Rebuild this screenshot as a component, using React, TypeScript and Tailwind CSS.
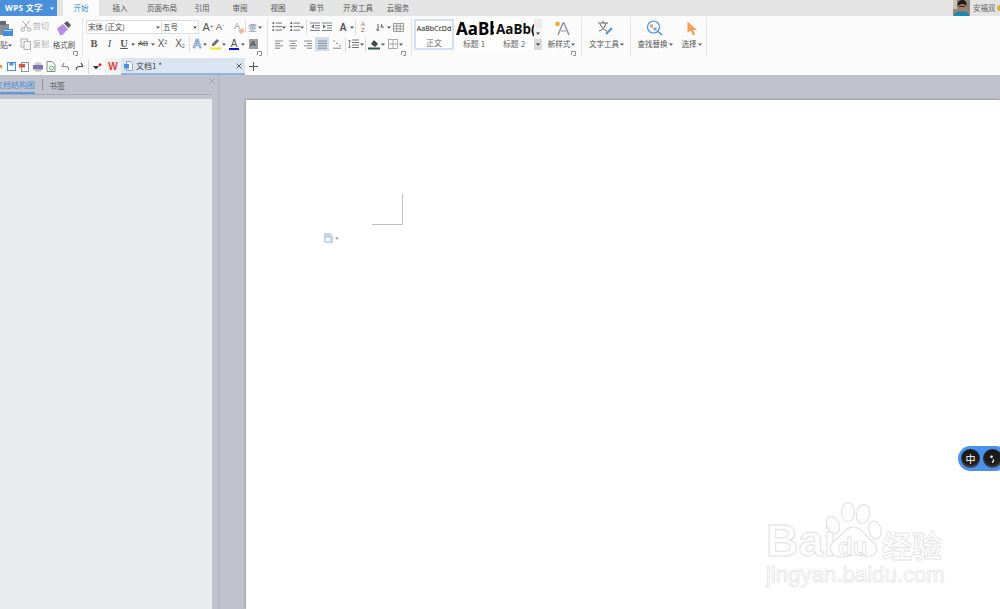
import React from "react";

const font = "font-['Noto_Sans_CJK_SC','Noto_Sans',sans-serif]";

function Caret({ w = 4, c = "#555" }: { w?: number; c?: string }) {
  return (
    <span className="flex shrink-0 items-center justify-center" style={{ width: w }}>
      <svg width="4" height="3" viewBox="0 0 4 3"><path d="M0 0.5h4L2 2.8z" fill={c} /></svg>
    </span>
  );
}

function Launcher() {
  return (
    <svg width="5" height="5" viewBox="0 0 5 5" className="shrink-0">
      <path d="M0.5 4V0.5H4.500V4.500H2" fill="none" stroke="#777" strokeWidth="0.8" />
    </svg>
  );
}

function Box({ w, children, active }: { w: number; children?: React.ReactNode; active?: boolean }) {
  return (
    <span className={`flex h-[14px] shrink-0 items-center justify-center ${active ? "bg-[#cfdcec]" : ""}`} style={{ width: w }}>
      {children}
    </span>
  );
}

function VLine() {
  return <span className="mx-[1px] h-[15px] w-px shrink-0 bg-[#dcdcdc]" />;
}

function Lines({ kind }: { kind: "left" | "center" | "right" | "just" | "dist" }) {
  const rows = {
    left: [[1, 8], [1, 5], [1, 8], [1, 5]],
    center: [[1, 8], [2.5, 5], [1, 8], [2.5, 5]],
    right: [[1, 8], [4, 5], [1, 8], [4, 5]],
    just: [[1, 9], [1, 9], [1, 9], [1, 9]],
    dist: [[1, 2], [4, 2], [7, 2], [1, 8]],
  }[kind];
  return (
    <svg width="11" height="9" viewBox="0 0 11 9">
      {rows.map((r, i) => (
        <rect key={i} x={r[0]} y={0.5 + i * 2.4} width={r[1]} height="1" fill="#85898f" />
      ))}
    </svg>
  );
}

function ListIcon({ numbered }: { numbered?: boolean }) {
  return (
    <svg width="10" height="10" viewBox="0 0 10 10">
      {[1, 4.5, 8].map((y) => (
        <g key={y}>
          <rect x="0.5" y={y - 0.7} width="1.6" height="1.6" fill={numbered ? "#333" : "#555"} />
          <rect x="3.500" y={y - 0.4} width="6.500" height="1" fill="#777" />
        </g>
      ))}
    </svg>
  );
}

function Indent({ out }: { out?: boolean }) {
  return (
    <svg width="10" height="10" viewBox="0 0 10 10">
      {[0.5, 3, 5.5, 8].map((y) => (
        <rect key={y} x={y === 0.5 || y === 8 ? 0 : 5} y={y} width={y === 0.5 || y === 8 ? 10 : 5} height="1" fill="#7b7f86" />
      ))}
      <path d={out ? "M4 2.500v4L1 4.500z" : "M1 2.500v4L4 4.500z"} fill="#5f6f86" />
    </svg>
  );
}

function Paste() {
  return (
    <svg width="14" height="17" viewBox="0 0 14 17">
      <rect x="-4" y="4" width="13" height="11" fill="#8a8d92" />
      <rect x="-1" y="1" width="7" height="4" fill="#666a70" />
      <rect x="3" y="9" width="10" height="7" fill="#3f8ee0" />
      <rect x="4" y="10" width="8" height="1" fill="#bcd8f5" />
    </svg>
  );
}

function Brush() {
  return (
    <svg width="16" height="16" viewBox="0 0 16 16">
      <path d="M1 8.500 7 4l5 5-5.500 6H4z" fill="#b58fe6" />
      <path d="M8 3.500 11 1l4 4-2.500 3z" fill="#5a5e64" />
    </svg>
  );
}

function Scissors() {
  return (
    <svg width="12" height="12" viewBox="0 0 12 12" fill="none" stroke="#a3a6ab" strokeWidth="1">
      <path d="M2.500 1 8 8M9.500 1 4 8" />
      <circle cx="2.800" cy="9.500" r="1.700" />
      <circle cx="9.200" cy="9.500" r="1.700" />
    </svg>
  );
}

function CopyIcon() {
  return (
    <svg width="12" height="12" viewBox="0 0 12 12" fill="#f4f4f4" stroke="#b0b2b6" strokeWidth="1">
      <rect x="1" y="1" width="6.500" height="8" />
      <rect x="4" y="3.500" width="6.500" height="8" />
    </svg>
  );
}

function TitleTab({ label, w, active }: { label: string; w: number; active?: boolean }) {
  return (
    <div
      className={`flex h-[16px] shrink-0 items-center justify-center text-[7.5px] ${active ? "bg-[#fbfbfb] text-[#3f8ee0]" : "text-[#555]"}`}
      style={{ width: w }}
    >
      {label}
    </div>
  );
}

function StyleCard({ sample, label, cls, selected }: { sample: string; label: string; cls: string; selected?: boolean }) {
  return (
    <div className={`flex h-full w-[40px] shrink-0 flex-col items-center overflow-hidden ${selected ? "border-2 border-[#d3e0f2]" : ""}`}>
      <div className={`flex h-[20px] w-full items-center overflow-hidden whitespace-nowrap font-['Noto_Sans',sans-serif] ${cls}`}>{sample}</div>
      <div className="text-[8px] leading-[10px] text-[#666]">{label}</div>
    </div>
  );
}

function Paw() {
  return (
    <svg width="56" height="58" viewBox="0 0 56 58" fill="#fff" stroke="#e2e2e2" strokeWidth="1.2">
      <ellipse cx="7" cy="24" rx="6" ry="9" transform="rotate(-25 7 24)" />
      <ellipse cx="22" cy="11" rx="6.500" ry="9.500" />
      <ellipse cx="37" cy="13" rx="6.500" ry="9.500" transform="rotate(10 37 13)" />
      <ellipse cx="49" cy="29" rx="6" ry="9" transform="rotate(-15 49 29)" />
      <path d="M27 26C19 26 16 35 8 40 1 46 4 56 16 56 22 56 25 54 30 54 36 54 39 56 45 55 52 53 52 45 47 41 39 35 36 26 27 26Z" />
    </svg>
  );
}

function Avatar() {
  return (
    <svg width="17" height="16" viewBox="0 0 17 16" className="shrink-0">
      <rect width="17" height="16" fill="#8b8a7c" />
      <rect width="4" height="9" fill="#c8c4b0" />
      <ellipse cx="9" cy="7" rx="4" ry="5" fill="#a97f66" />
      <path d="M4.500 6C4 1.500 7 0 9.500 0S14 2 13.500 6C12 3.500 7 3.500 4.500 6Z" fill="#1f1c1a" />
      <rect x="6" y="6" width="6" height="1" fill="#2a2a2a" />
      <path d="M1 16c0-3 3-4.500 5-4.500h6c2 0 4 1.500 4 4.500Z" fill="#1f86ad" />
    </svg>
  );
}

export default function App() {
  return (
    <div className={`relative flex h-[609px] w-[1000px] flex-col overflow-hidden bg-[#c0c3cb] ${font}`}>
      {/* title bar */}
      <div className="flex h-[16px] shrink-0 items-center bg-[#e4e4e4]">
        <div className="flex h-full w-[57px] shrink-0 items-center justify-between bg-[#4a90dc] pl-[5px] pr-[3px] text-[8px] font-bold text-white">
          <span className="whitespace-nowrap font-['Noto_Sans','Noto_Sans_CJK_SC',sans-serif] tracking-[0.4px]">WPS 文字</span>
          <Caret c="#fff" />
        </div>
        <div className="w-[6px] shrink-0" />
        <TitleTab label="开始" w={36} active />
        <TitleTab label="插入" w={42} />
        <TitleTab label="页面布局" w={42} />
        <TitleTab label="引用" w={38} />
        <TitleTab label="审阅" w={38} />
        <TitleTab label="视图" w={38} />
        <TitleTab label="章节" w={39} />
        <TitleTab label="开发工具" w={44} />
        <TitleTab label="云服务" w={36} />
        <div className="flex-1" />
        <Avatar />
        <span className="ml-[3px] w-[23px] shrink-0 whitespace-nowrap text-[7.5px] text-[#666]">安福双</span>
        <span className="ml-[1px] h-[6px] w-[3px] shrink-0 rounded-l-full bg-[#f0a838]" />
      </div>

      {/* ribbon */}
      <div className="flex h-[42px] shrink-0 items-stretch overflow-hidden bg-[#fbfbfb]">
        {/* clipboard */}
        <div className="relative flex h-full w-[82px] shrink-0">
          <div className="flex w-[20px] shrink-0 flex-col pt-[4px]">
            <Paste />
            <div className="mt-[3px] flex items-center text-[8px] leading-[10px] text-[#555]">
              <span>贴</span>
              <Caret />
            </div>
          </div>
          <div className="flex w-[32px] shrink-0 flex-col gap-[6px] pt-[4px] text-[8px] leading-[12px] text-[#b0b2b6]">
            <div className="flex items-center gap-[1px]"><Scissors />剪切</div>
            <div className="flex items-center gap-[1px]"><CopyIcon />复制</div>
          </div>
          <div className="flex w-[24px] shrink-0 flex-col items-center pt-[4px]">
            <Brush />
            <div className="mt-[4px] whitespace-nowrap text-[7.5px] leading-[10px] text-[#555]">格式刷</div>
          </div>
          <div className="absolute bottom-[2px] right-[4px]"><Launcher /></div>
        </div>
        <div className="my-[2px] w-px shrink-0 bg-[#e4e4e4]" />

        {/* font */}
        <div className="relative flex h-full w-[184px] shrink-0 flex-col pl-[3px] pt-[4px]">
          <div className="flex h-[14px] items-center">
            <div className="flex h-[14px] w-[76px] shrink-0 items-center justify-between border border-[#dcdcdc] bg-white pl-[1px] pr-[1px] text-[7.5px] text-[#444]">
              <span>宋体 (正文)</span><Caret />
            </div>
            <div className="ml-[-1px] flex h-[14px] w-[38px] shrink-0 items-center justify-between border border-[#dcdcdc] bg-white pl-[1px] pr-[1px] text-[7.5px] text-[#444]">
              <span>五号</span><Caret />
            </div>
            <Box w={3} />
            <Box w={12}><span className="font-['Liberation_Sans',sans-serif] text-[11px] leading-none text-[#555]">A<sup className="text-[6px]">+</sup></span></Box>
            <Box w={12}><span className="font-['Liberation_Sans',sans-serif] text-[9.5px] leading-none text-[#555]">A<sup className="text-[6px]">-</sup></span></Box>
            <Box w={5} />
            <Box w={12}>
              <span className="relative font-['Liberation_Sans',sans-serif] text-[9px] text-[#8a8d92]">A<span className="absolute bottom-[1px] left-[5px] h-[4px] w-[5px] rotate-[-30deg] bg-[#f0b890]" /></span>
            </Box>
            <Box w={4}><span className="h-[12px] w-px bg-[#dcdcdc]" /></Box>
            <Box w={11}><span className="text-[8.5px] text-[#7d8fa8]">雯</span></Box>
            <Caret />
          </div>
          <div className="mt-[3px] flex h-[14px] items-center text-[#555]">
            <Box w={16}><span className="font-['Liberation_Serif',serif] text-[10.5px] font-bold">B</span></Box>
            <Box w={15}><span className="font-['Liberation_Serif',serif] text-[10.5px] italic">I</span></Box>
            <Box w={14}><span className="font-['Liberation_Serif',serif] text-[10.5px] font-bold underline">U</span></Box>
            <Caret />
            <Box w={16}><span className="font-['Liberation_Sans',sans-serif] text-[7.5px] line-through">AB</span></Box>
            <Caret />
            <Box w={15}><span className="font-['Liberation_Sans',sans-serif] text-[10px] leading-none">X<sup className="text-[5.5px]">2</sup></span></Box>
            <Box w={2} />
            <Box w={16}><span className="font-['Liberation_Sans',sans-serif] text-[10px] leading-none">X<sub className="text-[5.5px]">2</sub></span></Box>
            <VLine />
            <Box w={12}><span className="font-['Liberation_Sans',sans-serif] text-[12px] font-bold text-[#c4d6f2] [-webkit-text-stroke:0.5px_#4a78c8]">A</span></Box>
            <Caret />
            <Box w={1} />
            <Box w={14}>
              <svg width="11" height="12" viewBox="0 0 11 12">
                <path d="M2 6l5-5 2 2-5 5H2z" fill="#6b6f75" />
                <rect x="0" y="9.500" width="11" height="2" fill="#f2ea1c" />
              </svg>
            </Box>
            <Caret />
            <Box w={1} />
            <Box w={14}>
              <span className="flex flex-col items-center">
                <span className="font-['Liberation_Sans',sans-serif] text-[10px] leading-[9px] text-[#555]">A</span>
                <span className="h-[2px] w-[10px] bg-[#1414d8]" />
              </span>
            </Box>
            <Caret />
            <Box w={2} />
            <Box w={12}><span className="flex h-[10px] w-[9px] items-center justify-center bg-[#9a9ca0] font-['Liberation_Sans',sans-serif] text-[8px] text-[#333]">A</span></Box>
          </div>
          <div className="absolute bottom-[2px] right-[5px]"><Launcher /></div>
        </div>
        <div className="my-[2px] w-px shrink-0 bg-[#e4e4e4]" />

        {/* paragraph */}
        <div className="relative flex h-full w-[143px] shrink-0 flex-col pl-[4px] pt-[4px]">
          <div className="flex h-[14px] items-center">
            <Box w={10}><ListIcon /></Box>
            <Caret />
            <Box w={3} />
            <Box w={11}><ListIcon numbered /></Box>
            <Caret />
            <Box w={1} />
            <VLine />
            <Box w={1} />
            <Box w={12}><Indent out /></Box>
            <Box w={12}><Indent /></Box>
            <Box w={3} />
            <Box w={14}><span className="font-['Liberation_Sans',sans-serif] text-[10px] font-bold text-[#555]">A</span></Box>
            <Caret />
            <VLine />
            <Box w={12}><span className="font-['Liberation_Sans',sans-serif] text-[6px] leading-[6px] text-[#c8504a]">A<br />Z</span></Box>
            <Box w={4} />
            <Box w={14}>
              <svg width="9" height="9" viewBox="0 0 9 9" fill="none" stroke="#555"><path d="M2 1v7M2 8 0.500 6M6 1l-1 3h3" /></svg>
            </Box>
            <Caret />
            <Box w={2} />
            <Box w={11}>
              <svg width="11" height="9" viewBox="0 0 11 9" fill="none" stroke="#888" strokeWidth="0.8"><rect x="0.500" y="0.500" width="10" height="8" /><path d="M0.500 3.200h10M0.500 5.900h10M3.800 0.500v8M7.200 0.500v8" /></svg>
            </Box>
          </div>
          <div className="mt-[3px] flex h-[14px] items-center">
            <Box w={14}><Lines kind="left" /></Box>
            <Box w={15}><Lines kind="center" /></Box>
            <Box w={14}><Lines kind="right" /></Box>
            <Box w={14} active><Lines kind="just" /></Box>
            <Box w={1} />
            <Box w={14}><Lines kind="dist" /></Box>
            <VLine />
            <Box w={12}>
              <svg width="11" height="10" viewBox="0 0 11 10">
                <path d="M1.500 1v8M0 2.500 1.500 1 3 2.500M0 7.500 1.500 9 3 7.500" fill="none" stroke="#5f6f86" strokeWidth="0.8" />
                {[1, 3.5, 6, 8.5].map((y) => <rect key={y} x="4" y={y - 0.5} width="7" height="1" fill="#777" />)}
              </svg>
            </Box>
            <Box w={1} />
            <Caret />
            <VLine />
            <Box w={14}>
              <svg width="12" height="11" viewBox="0 0 12 11">
                <path d="M3 5l3-4 4 4-3 3z" fill="#444" />
                <rect x="0" y="8.500" width="12" height="2" fill="#2c5a40" />
              </svg>
            </Box>
            <Caret />
            <Box w={2} />
            <Box w={11}>
              <svg width="10" height="10" viewBox="0 0 10 10" fill="none" stroke="#999" strokeWidth="0.8"><rect x="0.500" y="0.500" width="9" height="9" /><path d="M0.500 5h9M5 0.500v9" /></svg>
            </Box>
            <Box w={1} />
            <Caret />
          </div>
          <div className="absolute bottom-[2px] right-[5px]"><Launcher /></div>
        </div>
        <div className="my-[2px] w-px shrink-0 bg-[#e4e4e4]" />

        {/* styles */}
        <div className="ml-[2px] mt-[3px] flex h-[31px] w-[128px] shrink-0 bg-white">
          <StyleCard sample="AaBbCcDd" label="正文" cls="justify-center text-[7px] text-[#222]" selected />
          <StyleCard sample="AaBb" label="标题 1" cls="pl-[2px] text-[17px] font-bold text-black" />
          <StyleCard sample="AaBb(" label="标题 2" cls="pl-[2px] text-[13.5px] font-bold text-[#111]" />
          <div className="flex w-[8px] shrink-0 flex-col">
            <div className="h-[9px] bg-[#ececec]" />
            <div className="flex h-[11px] items-center justify-center bg-[#f4f4f4]"><Caret c="#333" /></div>
            <div className="flex h-[11px] items-center justify-center bg-[#d9d9d9]"><Caret c="#333" /></div>
          </div>
        </div>
        <div className="relative flex w-[39px] shrink-0 flex-col items-center pl-[1px] pt-[5px]">
          <svg width="17" height="15" viewBox="0 0 17 15">
            <circle cx="3.500" cy="3" r="2.400" fill="#eeb13c" />
            <path d="M4 14 9 2l1 0 5 12" fill="none" stroke="#8f959d" strokeWidth="1.500" />
            <path d="M7 10h5" stroke="#8f959d" strokeWidth="1" />
          </svg>
          <div className="mt-[3px] flex items-center whitespace-nowrap text-[7.5px] leading-[10px] text-[#555]">新样式<Caret w={6} /></div>
          <div className="absolute bottom-[2px] right-[5px]"><Launcher /></div>
        </div>
        <div className="my-[2px] w-px shrink-0 bg-[#e4e4e4]" />

        {/* tools */}
        <div className="flex w-[48px] shrink-0 flex-col items-center pt-[4px]">
          <svg width="18" height="16" viewBox="0 0 18 16" fill="none">
            <path d="M1 3h10M6 0.500V3M2 11c3.500-1 6-3.500 7-8M3 4c1 3 3.500 5.500 7 7" stroke="#666" strokeWidth="1" />
            <path d="M9 14l6-6" stroke="#5a94d8" strokeWidth="2.200" />
          </svg>
          <div className="ml-[2px] mt-[3px] flex items-center whitespace-nowrap text-[7.5px] leading-[10px] text-[#555]">文字工具<Caret w={6} /></div>
        </div>
        <div className="my-[2px] w-px shrink-0 bg-[#e4e4e4]" />

        {/* find */}
        <div className="flex w-[47px] shrink-0 flex-col items-center pt-[4px]">
          <svg width="17" height="16" viewBox="0 0 17 16" fill="none">
            <circle cx="7.500" cy="7" r="6" stroke="#4a90dc" strokeWidth="1.200" />
            <path d="M12 11.500 16 15" stroke="#4a90dc" strokeWidth="1.600" />
            <rect x="4" y="4.500" width="3" height="3" fill="#d99a7a" />
            <rect x="7.500" y="7.500" width="3" height="3" fill="#7aa8d8" />
          </svg>
          <div className="ml-[2px] mt-[3px] flex items-center whitespace-nowrap text-[7.5px] leading-[10px] text-[#555]">查找替换<Caret w={6} /></div>
        </div>
        <div className="flex w-[28px] shrink-0 flex-col items-center pt-[5px]">
          <svg width="12" height="15" viewBox="0 0 12 15"><path d="M1.500 0.500V12L4.500 9.500 7 14.500 9 13.500 7 9H11Z" fill="#f0a05a" /></svg>
          <div className="mt-[3px] flex items-center whitespace-nowrap text-[7.5px] leading-[10px] text-[#555]">选择<Caret w={6} /></div>
        </div>
        <div className="my-[2px] w-px shrink-0 bg-[#e4e4e4]" />
      </div>

      {/* quick access + doc tabs */}
      <div className="flex h-[17px] shrink-0 items-center bg-[#fbfbfb]">
        <span className="h-[3px] w-[2px] shrink-0 bg-[#e8953c]" />
        <span className="w-[3px] shrink-0" />
        <Box w={12}><svg width="9" height="9" viewBox="0 0 9 9"><rect x="0.500" y="0.500" width="8" height="8" fill="#fff" stroke="#4a90dc" /><rect x="2.500" y="0.500" width="4" height="3" fill="#4a90dc" /></svg></Box>
        <Box w={14}><svg width="10" height="10" viewBox="0 0 10 10"><rect x="2.500" y="0.500" width="7" height="9" fill="#fff" stroke="#8a9a8a" /><rect x="0" y="2" width="6" height="3.500" fill="#d8504a" /></svg></Box>
        <Box w={13}><svg width="10" height="10" viewBox="0 0 10 10"><rect x="2" y="0.500" width="6" height="3" fill="#ccc" /><rect x="0" y="3" width="10" height="4.500" fill="#7d72b4" /><rect x="2" y="7" width="6" height="2.500" fill="#bbb" /></svg></Box>
        <Box w={14}><svg width="10" height="11" viewBox="0 0 10 11" fill="none"><path d="M1 .5h5l3 3v7H1z" stroke="#888" fill="#fff" /><circle cx="5.500" cy="7" r="2" stroke="#4fa85a" /></svg></Box>
        <Box w={14}><svg width="9" height="9" viewBox="0 0 9 9" fill="none" stroke="#888" strokeWidth="1.200"><path d="M1 4.500 3 1M1 4.500h3.500C7 4.500 8 6 7.500 8" /></svg></Box>
        <Box w={14}><svg width="9" height="9" viewBox="0 0 9 9" fill="none" stroke="#444" strokeWidth="1.200"><path d="M8 4.500 6 1M8 4.500H4.500C2 4.500 1 6 1.500 8" /></svg></Box>
        <span className="w-[2px] shrink-0" />
        <span className="h-[14px] w-px shrink-0 bg-[#d8d8d8]" />
        <span className="w-[3px] shrink-0" />
        <Box w={11}><svg width="9" height="8" viewBox="0 0 9 8"><path d="M0 3h6L3 6.500z" fill="#333" /><circle cx="7" cy="1.800" r="1.500" fill="#e02020" /></svg></Box>
        <span className="w-[2px] shrink-0" />
        <span className="flex h-full w-[16px] shrink-0 items-center justify-center bg-[#f1f1f1]">
          <span className="font-['Liberation_Sans',sans-serif] text-[10px] font-bold leading-none text-[#e0403a]">W</span>
        </span>
        <div className="flex h-full w-[124px] shrink-0 items-center border-b-2 border-[#8fb4de] bg-[#dbe5f1] pl-[3px] pr-[3px] text-[8px] text-[#444]">
          <svg width="9" height="10" viewBox="0 0 9 10" className="shrink-0"><path d="M2.500.5h4l2 2v7h-6z" fill="#fff" stroke="#8aa8cc" /><rect x="0" y="3" width="5" height="4.500" fill="#4a90dc" /></svg>
          <span className="ml-[3px] whitespace-nowrap">文档1 *</span>
          <span className="flex-1" />
          <svg width="6" height="6" viewBox="0 0 6 6" stroke="#555"><path d="M.5.5l5 5M5.500.5l-5 5" /></svg>
        </div>
        <span className="ml-[2px] flex w-[12px] shrink-0 justify-center">
          <svg width="9" height="9" viewBox="0 0 9 9" stroke="#555"><path d="M4.500 0v9M0 4.500h9" /></svg>
        </span>
      </div>

      {/* body */}
      <div className="flex min-h-0 flex-1">
        {/* side panel */}
        <div className="flex h-full w-[212px] shrink-0 flex-col">
          <div className="flex h-[19px] shrink-0 items-center text-[8px] text-[#555]">
            <span className="flex h-full w-[35px] items-center justify-end whitespace-nowrap border-b-2 border-[#5b9ae0] pt-[2px] text-[#4a8bd6]">文档结构图</span>
            <span className="ml-[7px] mr-[6px] h-[11px] w-px bg-[#8f9198]" />
            <span className="flex-1 pt-[2px]">书签</span>
          </div>
          <div className="h-px shrink-0 bg-[#a9acb3]" />
          <div className="mt-[4px] min-h-0 flex-1 bg-[#e9ebee]" />
        </div>
        <div className="relative w-[7px] shrink-0">
          <svg width="8" height="8" viewBox="0 0 8 8" stroke="#a5a8ae" className="absolute left-[-4px] top-[2px]"><path d="M1 1l6 6M7 1l-6 6" /></svg>
        </div>
        <div className="w-px shrink-0 bg-[#b4b7be]" />
        {/* document area */}
        <div className="flex min-w-0 flex-1 flex-col pl-[26px] pt-[25px]">
          <div className="min-h-0 flex-1 bg-white shadow-[0_-1px_2px_rgba(0,0,0,0.15),-1px_0_2px_rgba(0,0,0,0.12)]">
            <div className="ml-[126px] mt-[94px] h-[31px] w-[31px] border-b border-r border-[#bdbdbd]" />
            <div className="ml-[78px] mt-[8px] flex items-center gap-[2px]">
              <svg width="9" height="10" viewBox="0 0 9 10"><path d="M0 0h6l3 3v7H0z" fill="#c4d4ee" /><path d="M2 5h4v3H2z" fill="#fff" /></svg>
              <Caret c="#999" />
            </div>
          </div>
        </div>
      </div>

      {/* IME floating widget */}
      <div className="absolute left-[958px] top-[446px] flex h-[25px] w-[50px] items-center gap-[3px] rounded-full bg-[#4b92ee] pl-[3px]">
        <span className="flex h-[19px] w-[19px] items-center justify-center rounded-full bg-[#1c1c1c] text-[10px] text-white shadow-[inset_0_-2px_2px_rgba(255,255,255,0.2)]">中</span>
        <span className="flex h-[19px] w-[19px] items-center justify-center rounded-full bg-[#1c1c1c] shadow-[inset_0_-2px_2px_rgba(255,255,255,0.2)]">
          <svg width="7" height="8" viewBox="0 0 7 8"><circle cx="2.500" cy="1.800" r="1.300" fill="#fff" /><path d="M4 4.500c1 .8.500 2.500-1 3" stroke="#fff" strokeWidth="1.300" fill="none" /></svg>
        </span>
      </div>

      {/* watermark */}
      <div className="absolute left-[766px] top-[501px] h-[86px] w-[182px]">
        <span className="absolute left-0 top-[17px] font-['Liberation_Sans',sans-serif] text-[45px] font-bold leading-[45px] text-white [-webkit-text-stroke:1px_#e2e2e2]">Bai</span>
        <div className="absolute left-[60px] top-0"><Paw /></div>
        <span className="absolute left-[72px] top-[34px] font-['Liberation_Sans',sans-serif] text-[24px] font-bold leading-[24px] text-white [-webkit-text-stroke:0.8px_#e0e0e0]">du</span>
        <span className="absolute left-[116px] top-[26px] text-[30px] font-bold leading-[34px] text-white [-webkit-text-stroke:0.8px_#e2e2e2]">经验</span>
        <span className="absolute left-0 top-[60px] whitespace-nowrap font-['Liberation_Sans',sans-serif] text-[22.2px] leading-[27px] text-white [-webkit-text-stroke:0.7px_#e2e2e2]">jingyan.baidu.com</span>
      </div>
    </div>
  );
}
